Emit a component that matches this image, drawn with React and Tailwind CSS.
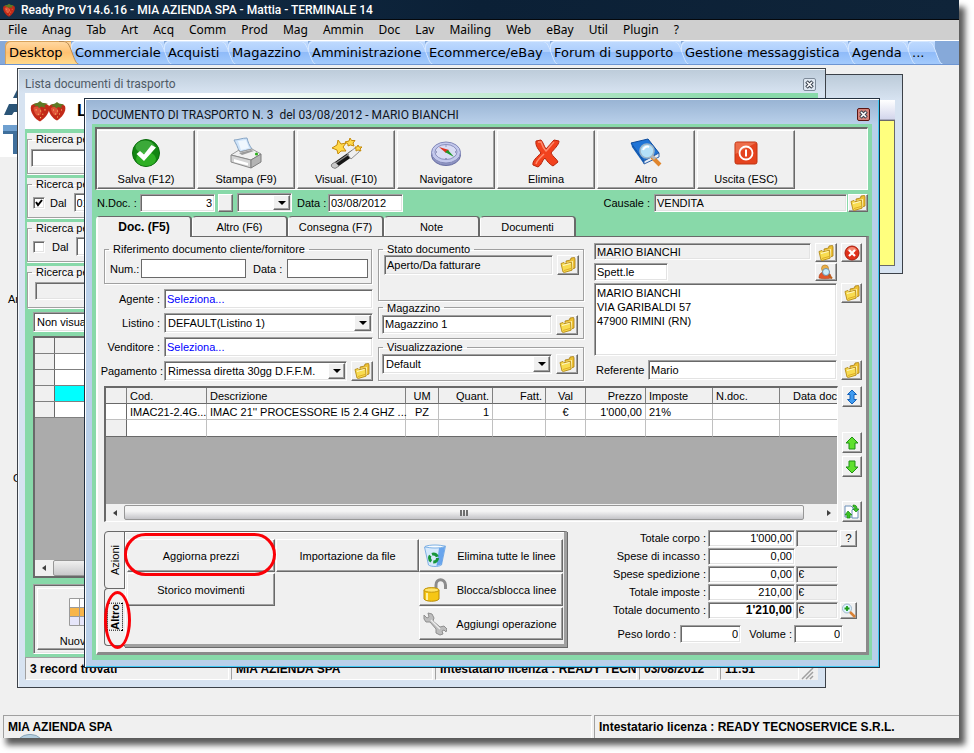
import React from "react";

const SUNKEN =
  "border border-t-[#a0a0a0] border-l-[#a0a0a0] border-b-white border-r-white shadow-[inset_1px_1px_0_#696969,inset_-1px_-1px_0_#e3e3e3]";
const RAISED =
  "border border-t-white border-l-white border-b-[#696969] border-r-[#696969] shadow-[inset_-1px_-1px_0_#a0a0a0] bg-[#f0f0f0]";
const GROUP = "min-w-0 border border-[#a0a0a0] shadow-[1px_1px_0_#fff,inset_1px_1px_0_#fff]";
const LEGEND = "ml-1 px-1 leading-3";

/* ---------- icons ---------- */

function Strawberry({ className }) {
  return (
    <svg viewBox="0 0 20 20" className={className} aria-hidden="true">
      <path d="M2 5c3-3 13-3 16 0 2 6-4 12-8 14.500C6 18 0 11 2 5Z" fill="#c22a18" />
      <path d="M4 7c3-2 6-1 7 2s-1 6-4 5c-2-2-3-5-3-7Z" fill="#ec6446" opacity=".7" />
      <path d="M3 4l5-1.500L10 1l2 1.500 5 1-3 1.500 1 2-4-1-2 1.500-1-2-3 .5 1-1.500Z" fill="#5d7a25" />
      <path d="M6 9h1M10 10h1M14 9h1M8 13h1M12 13h1M10 16h1" stroke="#f2c46a" strokeWidth="1" />
    </svg>
  );
}

function FolderIcon() {
  return (
    <svg width="16" height="16" viewBox="0 0 16 16" aria-hidden="true">
      <path d="M6 4l4.500-1 .5-2 3.500-.5.500 1.500V11l-8 3Z" fill="#eec235" stroke="#a87c10" strokeWidth=".8" />
      <path d="M6.500 5.500L13 4v8L7 14Z" fill="#fff2ae" />
      <path d="M1 6.500l3-1 1 1.200 6.500-1.500.500 8-7.500 2.200L3 15Z" fill="#f8dc50" stroke="#b58a16" strokeWidth=".9" />
      <path d="M3 8.500l7.500-2" stroke="#fff7c8" strokeWidth="1" />
      <path d="M4 13.500l7-2" stroke="#e0ac24" strokeWidth="1" />
    </svg>
  );
}

function SaveIcon() {
  return (
    <svg width="30" height="30" viewBox="0 0 30 30" aria-hidden="true">
      <circle cx="15" cy="15" r="13.500" fill="#128512" stroke="#0a6b0c" />
      <ellipse cx="15" cy="21" rx="10" ry="7" fill="#38bd2c" opacity=".75" />
      <ellipse cx="14" cy="9" rx="9.500" ry="6.500" fill="#5cc65a" opacity=".55" />
      <path d="M5.500 16l3.500-3 4 3.500L20.500 7l4.500 2.500L13 23Z" fill="#fff" />
    </svg>
  );
}

function PrinterIcon() {
  return (
    <svg width="32" height="32" viewBox="0 0 32 32" aria-hidden="true">
      <path d="M4 3c4 0 8-2 13-2 1 4 2 7 5 11L9 15C8 10 6 7 4 3Z" fill="#cfe4fa" stroke="#86a4c4" />
      <path d="M8 4l8-1 3 8-8 2Z" fill="#f6fbff" opacity=".8" />
      <path d="M1 18l8-5 1 2 12-3 9 5-10 6Z" fill="#f1f1f1" stroke="#9a9a9a" />
      <path d="M1 18l20 5v8L1 25Z" fill="#d4d4d4" stroke="#8a8a8a" />
      <path d="M21 23l10-6v8l-10 6Z" fill="#b4b4b4" stroke="#7e7e7e" />
      <path d="M4 22l14 4v2.500L4 25Z" fill="#fff" />
      <path d="M9 16l12-3 3 1-12 4Z" fill="#9b9b9b" />
      <circle cx="26.500" cy="17" r="1.600" fill="#2cae1c" />
    </svg>
  );
}

function WandIcon() {
  return (
    <svg width="32" height="32" viewBox="0 0 32 32" aria-hidden="true">
      <path d="M2 27L22 13l4 4L6 31c-3 1-6-2-4-4Z" fill="#161616" />
      <path d="M2 27l3-2 4 4-3 2c-3 1-6-2-4-4Z" fill="#c9c9c9" stroke="#666" strokeWidth=".6" />
      <path d="M17 17l8-6c3-2 6 1 4 4l-8 7Z" fill="#efefef" stroke="#777" strokeWidth=".8" />
      <path d="M6 26l13-9" stroke="#8a8a8a" strokeWidth="1.200" />
      <path d="M8 3l3 4 5-1-3 4 3 4-5 0-3 3-1-4-5-2 5-3Z" fill="#ffd84a" stroke="#c58a08" />
      <path d="M20 1l1.500 2.500 3.500 0-2 2.500 1 3-3.500-1L18 9l0-2-3-2 4-1Z" fill="#ffd84a" stroke="#c58a08" />
      <path d="M28 8l1 2 3 0-2 2 1 2-3-1-2 1 0-2-1-2 2 0Z" fill="#ffd84a" stroke="#c58a08" />
    </svg>
  );
}

function CompassIcon() {
  return (
    <svg width="32" height="28" viewBox="0 0 32 28" aria-hidden="true">
      <ellipse cx="16" cy="16" rx="14.500" ry="10.500" fill="#8e94c2" stroke="#686ea2" />
      <ellipse cx="16" cy="13.500" rx="14.500" ry="10.500" fill="#c3c8ec" stroke="#8389b8" />
      <ellipse cx="16" cy="13" rx="11" ry="7.500" fill="#d9dcf4" stroke="#8a90bd" />
      <path d="M16 14L9 8l10 3Z" fill="#e0321c" />
      <path d="M15 13l9 5-6-7Z" fill="#1d9a2a" />
      <path d="M16 6.500v1M6 13h1M25 13h1M16 19v1" stroke="#555b8c" />
    </svg>
  );
}

function DeleteIcon() {
  return (
    <svg width="30" height="30" viewBox="0 0 30 30" aria-hidden="true">
      <path
        d="M5 3l5-1c2 2 3 6 5 9 3-3 5-6 8-9l5 1c0 4-5 8-8 12 2 4 6 6 7 9l-5 4c-4-2-6-5-8-8-3 2-3 7-7 9l-5-2c-1-4 4-8 8-12C8 12 4 8 5 3Z"
        fill="#f2421e" stroke="#b8260c"
      />
      <path d="M7 4l3 0c1 3 3 7 5 9 3-3 5-6 8-9M5 26c1-4 5-7 8-10" fill="none" stroke="#ff8c6e" strokeWidth="1.500" />
    </svg>
  );
}

function BookSearchIcon() {
  return (
    <svg width="32" height="32" viewBox="0 0 32 32" aria-hidden="true">
      <path d="M1 6l17-4 11 14-15 8Z" fill="#1f74d6" stroke="#0d4b9c" />
      <path d="M1 6l13 18v3L2 10Z" fill="#0f5ab4" />
      <path d="M14 24l15-8v4l-15 7Z" fill="#e6eef8" stroke="#2f62a8" />
      <circle cx="17" cy="14" r="7" fill="#b4e0f8" stroke="#9cb4c6" strokeWidth="1.600" />
      <path d="M13 13c1-3 4-4 6-3" stroke="#fff" strokeWidth="2" fill="none" />
      <path d="M22 20l8 8" stroke="#e0862e" strokeWidth="4" />
      <path d="M22 19l3 3" stroke="#b5b5b5" strokeWidth="3" />
    </svg>
  );
}

function ExitIcon() {
  return (
    <svg width="24" height="24" viewBox="0 0 24 24" aria-hidden="true">
      <rect x="1" y="1" width="22" height="22" rx="2" fill="#e5431e" stroke="#bf3311" />
      <path d="M1.500 1.500h21L1.500 13Z" fill="#f28a68" opacity=".6" />
      <circle cx="12" cy="12" r="6.500" fill="none" stroke="#fff" strokeWidth="1.800" />
      <path d="M12 8.500v7" stroke="#fff" strokeWidth="2" />
    </svg>
  );
}

function RemoveIcon() {
  return (
    <svg width="16" height="16" viewBox="0 0 16 16" aria-hidden="true">
      <circle cx="8" cy="8" r="7" fill="#e0301a" stroke="#a81f0e" />
      <path d="M3 5c2-4 8-4 10 0-3 2-7 2-10 0Z" fill="#f58a72" />
      <path d="M5 5l6 6M11 5l-6 6" stroke="#fff" strokeWidth="2.200" />
    </svg>
  );
}

function PersonSearchIcon() {
  return (
    <svg width="16" height="16" viewBox="0 0 16 16" aria-hidden="true">
      <path d="M1 14c0-5 3-6 6-6s6 1 6 6c-4 1-8 1-12 0Z" fill="#e2562a" stroke="#a63a14" strokeWidth=".6" />
      <circle cx="7" cy="4.500" r="3.500" fill="#e9b04a" stroke="#b0751a" strokeWidth=".6" />
      <circle cx="8" cy="8" r="3.500" fill="#c9ecfb" stroke="#6f8ea6" />
      <path d="M10.500 11l3.500 3.500" stroke="#b9601d" strokeWidth="2" />
    </svg>
  );
}

function UpDownIcon() {
  return (
    <svg width="14" height="16" viewBox="0 0 14 16" aria-hidden="true">
      <path d="M7 1l4.500 4.500H9v5h2.500L7 15l-4.500-4.500H5v-5H2.500Z" fill="#3f9bf0" stroke="#1561b8" />
    </svg>
  );
}

function ArrowIcon({ className }) {
  return (
    <svg width="14" height="14" viewBox="0 0 14 14" className={className} aria-hidden="true">
      <path d="M7 1l6 6h-3v6H4V7H1Z" fill="#5fe02d" stroke="#1f8f14" />
    </svg>
  );
}

function SwapIcon() {
  return (
    <svg width="16" height="16" viewBox="0 0 16 16" aria-hidden="true">
      <path d="M1 2h6l2 2v9H1Z" fill="#fff" stroke="#6b8fb8" />
      <path d="M9 5h5v9H8V6Z" fill="#fff" stroke="#6b8fb8" />
      <path d="M4 7l4 4H6v3H3v-3H1Z" fill="#3cc224" stroke="#178a10" strokeWidth=".7" />
      <path d="M9 1c3 0 4 1 4 4h2l-3 3-3-3h2c0-2-1-2-2-2Z" fill="#3cc224" stroke="#178a10" strokeWidth=".7" />
    </svg>
  );
}

function ZoomPlusIcon() {
  return (
    <svg width="15" height="15" viewBox="0 0 15 15" aria-hidden="true">
      <circle cx="6" cy="5.500" r="4.500" fill="#dff4ff" stroke="#9fb8cc" />
      <path d="M6 3v5M3.500 5.500h5" stroke="#1e9c1a" strokeWidth="1.800" />
      <path d="M9 9l5 5" stroke="#d98236" strokeWidth="2.500" />
    </svg>
  );
}

function BinIcon() {
  return (
    <svg width="24" height="24" viewBox="0 0 24 24" aria-hidden="true">
      <path d="M1.500 3l21-1-4 19c-3 2-10 2-13 0Z" fill="#d6e9fc" stroke="#7fb0e4" />
      <path d="M16 4l6-1.500-3.500 18-5 1.500Z" fill="#4d94e8" opacity=".8" />
      <path d="M2 2.500c4-2 16-2 20 0-4 2-16 2-20 0Z" fill="#f8fcff" stroke="#7db0e4" />
      <circle cx="10.500" cy="14" r="4" fill="none" stroke="#18963a" strokeWidth="3" strokeDasharray="6.400 2" />
    </svg>
  );
}

function PadlockIcon() {
  return (
    <svg width="24" height="24" viewBox="0 0 24 24" aria-hidden="true">
      <path d="M13 12V7c0-7 9-7 9.500 0v4" fill="none" stroke="#8b8b8b" strokeWidth="3" />
      <path d="M1 12c2-3 13-3 15 0v9c-2 3-13 3-15 0Z" fill="#f6c614" stroke="#b98c06" />
      <ellipse cx="8.500" cy="12" rx="7.500" ry="2.200" fill="#ffe46a" stroke="#c99a0a" />
      <path d="M4 15v7" stroke="#fff0a0" strokeWidth="2" />
    </svg>
  );
}

function WrenchIcon() {
  return (
    <svg width="24" height="24" viewBox="0 0 24 24" aria-hidden="true">
      <path
        d="M5 1l4 1 2 4-1 3 7 6 4-1 3 3-1 3-2-2-2 1 1 3-3 1-4-2 0-4-6-7-4 0-2-3 0-4 3 3 2-1Z"
        fill="#bdbdbd" stroke="#8f8f8f"
      />
      <path d="M8 8l9 9" stroke="#ececec" strokeWidth="1.500" />
    </svg>
  );
}

/* ---------- small parts ---------- */

function IconButton({ label, className = "h-5 w-[22px]", children }) {
  return (
    <button type="button" aria-label={label} className={`${RAISED} flex shrink-0 items-center justify-center ${className}`}>
      {children}
    </button>
  );
}

function TextInput({ id, value = "", className = "", label, readOnly }) {
  return (
    <input
      id={id}
      aria-label={label}
      defaultValue={value}
      readOnly={readOnly}
      className={`${SUNKEN} min-w-0 px-[2px] outline-none ${readOnly ? "bg-[#f0f0f0]" : "bg-white"} ${className}`}
    />
  );
}

function Combo({ id, value = "", label, className = "" }) {
  return (
    <div className={`${SUNKEN} flex bg-white p-px ${className}`}>
      <select id={id} aria-label={label} className="min-w-0 flex-1 appearance-none bg-transparent pl-[2px] outline-none">
        <option>{value}</option>
      </select>
      <span className={`${RAISED} flex w-[17px] items-center justify-center`} aria-hidden="true">
        <span className="border-x-4 border-t-4 border-x-transparent border-t-black" />
      </span>
    </div>
  );
}

function CloseButton({ className }) {
  return (
    <button type="button" aria-label="Chiudi" className={`flex h-[13px] w-[13px] items-center justify-center rounded-[2px] border ${className}`}>
      <svg width="9" height="9" viewBox="0 0 9 9" aria-hidden="true">
        <path d="M1.500 1.500l6 6M7.500 1.500l-6 6" stroke="#39424f" strokeWidth="3.600" />
        <path d="M2 2l5 5M7 2l-5 5" stroke="#fff" strokeWidth="1.600" />
      </svg>
    </button>
  );
}

/* ---------- application chrome ---------- */

const MENU = ["File", "Anag", "Tab", "Art", "Acq", "Comm", "Prod", "Mag", "Ammin", "Doc", "Lav", "Mailing", "Web", "eBay", "Util", "Plugin", "?"];

const TABS = [
  ["Desktop", "w-[66px]"],
  ["Commerciale", "w-[93px]"],
  ["Acquisti", "w-[64px]"],
  ["Magazzino", "w-[80px]"],
  ["Amministrazione", "w-[117px]"],
  ["Ecommerce/eBay", "w-[125px]"],
  ["Forum di supporto", "w-[131px]"],
  ["Gestione messaggistica", "w-[167px]"],
  ["Agenda", "w-[60px]"],
  ["...", "w-[27px]"],
];

function TabGradients() {
  return (
    <svg width="0" height="0" className="absolute" aria-hidden="true">
      <linearGradient id="tab-on" x1="0" y1="0" x2="0" y2="23" gradientUnits="userSpaceOnUse">
        <stop offset="0" stopColor="#ffd9a4" />
        <stop offset=".5" stopColor="#ffc171" />
        <stop offset="1" stopColor="#ffd98b" />
      </linearGradient>
      <linearGradient id="tab-off" x1="0" y1="0" x2="0" y2="23" gradientUnits="userSpaceOnUse">
        <stop offset="0" stopColor="#bfdafe" />
        <stop offset=".5" stopColor="#abcdfd" />
        <stop offset=".5" stopColor="#8fbbf9" />
        <stop offset="1" stopColor="#a3cafc" />
      </linearGradient>
    </svg>
  );
}

function AppTab({ name, width, active, order }) {
  return (
    <button type="button" className={`relative flex h-[23px] shrink-0 ${width}`} style={{ zIndex: order }}>
      <span
        className={
          active
            ? "flex flex-1 items-center rounded-tl-[5px] bg-linear-to-b from-[#ffd9a4] via-[#ffc171] to-[#ffd98b] pl-1 whitespace-nowrap shadow-[inset_1px_1px_0_#d9a35c]"
            : "flex flex-1 items-center rounded-tl-[5px] bg-[linear-gradient(#bfdafe,#abcdfd_50%,#8fbbf9_50%,#a3cafc)] pl-1 whitespace-nowrap shadow-[inset_1px_1px_0_#d5e7ff]"
        }
      >
        <span className="relative z-10 w-0">{name}</span>
      </span>
      <svg width="20" height="23" viewBox="0 0 20 23" className="-mr-2 -ml-3 shrink-0" aria-hidden="true">
        <path d="M0 0h4c5 0 6 3 9 11s4 11 7 12H0Z" fill={active ? "url(#tab-on)" : "url(#tab-off)"} />
        <path d="M0 .5h4c5 0 6 3 9 11s4 11 7 12" fill="none" stroke={active ? "#b98a52" : "#d5e7ff"} />
      </svg>
    </button>
  );
}

/* ---------- list window ---------- */

const STATUS_CELL = "overflow-hidden border border-[#a0a0a0] border-r-white border-b-white pt-1 whitespace-nowrap";

function ListWindow() {
  return (
    <section className="absolute top-[3px] left-[17px] flex h-[620px] w-[809px] flex-col border border-[#3c4148] bg-linear-to-b from-[#bccbd9] to-[#d7e3f1] to-[24px] px-[7px] pb-[7px] shadow-[inset_1px_1px_0_#f4f8fc]">
      <header className="flex h-6 shrink-0 items-center justify-between pt-[6px] pr-[2px]">
        <h2 className="font-['Roboto'] text-[12px] leading-4 text-[#4f5a66]">Lista documenti di trasporto</h2>
        <CloseButton className="border-[#7d8a99] bg-[#dfe8f2]" />
      </header>
      <div className="flex h-9 shrink-0 items-center bg-linear-to-r from-white from-25% to-[#88d9a9] to-90% pl-1">
        <Strawberry className="-mr-1 h-6 w-[22px]" />
        <Strawberry className="mr-1 h-5 w-5" />
        <h3 className="pl-[6px] text-[17px] leading-5 font-bold">Lista</h3>
      </div>
      <div className="flex min-h-0 flex-1 flex-col bg-[#88d9a9] pl-[2px]">
        <div className="flex w-[220px] flex-col gap-[3px] pt-1">
          <div className="h-[42px] bg-[#f0f0f0]">
            <fieldset className={`${GROUP} h-[41px]`}>
              <legend className={LEGEND}>Ricerca per</legend>
              <TextInput label="Ricerca per numero" className="mt-1 ml-[3px] h-[18px] w-[210px]" />
            </fieldset>
          </div>
          {[true, false].map((on, i) => (
            <div key={i} className="h-[41px] bg-[#f0f0f0]">
              <fieldset className={`${GROUP} h-10`}>
                <legend className={LEGEND}>Ricerca per</legend>
                <div className="flex items-center gap-[7px] pt-[3px] pl-[5px]">
                  <input id={`dal${i}`} type="checkbox" defaultChecked={on} className={`${SUNKEN} h-3 w-3 appearance-none bg-white`} />
                  {on && (
                    <svg viewBox="0 0 8 8" className="pointer-events-none -ml-[17px] h-2 w-2" aria-hidden="true">
                      <path d="M1 3l2 3 4-5" fill="none" stroke="#000" strokeWidth="2" />
                    </svg>
                  )}
                  <label htmlFor={`dal${i}`}>Dal</label>
                  <TextInput label="Data iniziale" value={on ? "01/08/2012" : ""} className="h-[19px] w-20" />
                </div>
              </fieldset>
            </div>
          ))}
          <div className="h-[42px] bg-[#f0f0f0]">
            <fieldset className={`${GROUP} h-[42px]`}>
              <legend className={LEGEND}>Ricerca per</legend>
              <TextInput label="Ricerca per stato" readOnly className="mt-1 ml-[7px] h-[18px] w-[200px]" />
            </fieldset>
          </div>
        </div>
        <div className="mt-1 ml-[6px] flex min-h-0 flex-1 flex-col">
          <Combo label="Filtro" value="Non visualizzare" className="h-5 w-[200px]" />
          <div className="mt-1 flex h-[242px] w-[200px] flex-col border-2 border-[#696969] bg-[#ababab]">
            {["", "bg-white", "bg-white", "bg-[#00ffff]", "bg-white"].map((c, i) => (
              <div key={i} className="flex h-4 shrink-0 border-b border-[#808080] bg-[#f0f0f0]">
                <span className="w-5 border-r border-[#696969]" />
                <span className={`flex-1 ${c}`} />
              </div>
            ))}
            <div className="mt-auto flex h-4 bg-[#f0f0f0]">
              <span className="flex w-[18px] items-center justify-center">
                <span className="border-y-[3px] border-r-4 border-y-transparent border-r-[#404040]" />
              </span>
              <span className="flex-1 rounded-[2px] border border-[#979797] bg-linear-to-b from-[#f0f0f0] to-[#c9c9cb]" />
            </div>
          </div>
          <div className={`${SUNKEN} mt-[6px] h-[70px] w-[160px] bg-[#f0f0f0] p-[3px]`}>
            <button type="button" className={`${RAISED} flex h-full w-[106px] flex-col items-center justify-end pb-[2px]`}>
              <svg width="42" height="28" viewBox="0 0 42 28" className="mb-[9px]" aria-hidden="true">
                <path d="M.5 .5h41v27H.5Z" fill="#fff" stroke="#9a9a9a" />
                <path d="M1 10h40v8H1Z" fill="#f7b54a" />
                <path d="M1 19h40v8H1Z" fill="#e6e6fa" />
                <path d="M10.500 0v28M20.500 0v28M30.500 0v28M0 9.500h42M0 18.500h42" stroke="#9a9a9a" />
              </svg>
              <span className="leading-3">Nuovo (INS)</span>
            </button>
          </div>
        </div>
      </div>
      <footer className="flex h-[23px] shrink-0 gap-[2px] bg-[#f0f0f0] text-[12px] font-bold">
        <span className={`${STATUS_CELL} w-[204px] pl-1`}>3 record trovati</span>
        <span className={`${STATUS_CELL} w-[202px] pl-1`}>MIA AZIENDA SPA</span>
        <span className={`${STATUS_CELL} w-[202px] pl-1`}>Intestatario licenza : READY TECN</span>
        <span className={`${STATUS_CELL} w-[79px] pl-1`}>03/08/2012</span>
        <span className={`${STATUS_CELL} w-[79px] pl-1`}>11:51</span>
        <svg width="14" height="14" viewBox="0 0 14 14" className="mt-auto" aria-hidden="true">
          <path d="M1 13L12 2M5 13l7-7M9 13l3-3" stroke="#a0a0a0" strokeWidth="1.500" />
        </svg>
      </footer>
    </section>
  );
}

/* ---------- document window ---------- */

const TOOLS = [
  ["Salva (F12)", SaveIcon],
  ["Stampa (F9)", PrinterIcon],
  ["Visual. (F10)", WandIcon],
  ["Navigatore", CompassIcon],
  ["Elimina", DeleteIcon],
  ["Altro", BookSearchIcon],
  ["Uscita (ESC)", ExitIcon],
];

const COLUMNS = [
  ["", "w-[21px]", "text-left", ""],
  ["Cod.", "w-[80px]", "text-left", "IMAC21-2.4G..."],
  ["Descrizione", "w-[199px]", "text-left", "IMAC 21'' PROCESSORE I5 2.4 GHZ ..."],
  ["UM", "w-[33px]", "text-center", "PZ"],
  ["Quant.", "w-[54px]", "text-right", "1"],
  ["Fatt.", "w-[53px]", "text-right", ""],
  ["Val", "w-[40px]", "text-center", "€"],
  ["Prezzo", "w-[60px]", "text-right", "1'000,00"],
  ["Imposte", "w-[67px]", "text-left", "21%"],
  ["N.doc.", "w-[67px]", "text-left", ""],
  ["Data doc", "", "text-right", ""],
];

function LinesTable() {
  return (
    <div className="flex h-[136px] min-w-0 flex-1 flex-col overflow-hidden border-t-2 border-l-2 border-r border-b border-[#696969] border-r-white border-b-white bg-[#ababab]">
      <table className="w-full table-fixed border-separate border-spacing-0">
        <thead>
          <tr className="bg-[#f0f0f0]">
            {COLUMNS.map(([name, w, align], i) => (
              <th key={i} className={`${w} ${align} h-4 border-r border-b border-r-[#808080] border-b-[#696969] px-[3px] leading-[14px] font-normal whitespace-nowrap last:border-r-0 last:px-0`}>
                {name}
              </th>
            ))}
          </tr>
        </thead>
        <tbody>
          <tr className="bg-white">
            {COLUMNS.map(([, , align, v], i) => (
              <td key={i} className={`${align} h-4 border-r border-b border-[#c0c0c0] px-[3px] leading-[14px] whitespace-nowrap first:border-r-[#696969] last:border-r-0`}>
                {v}
              </td>
            ))}
          </tr>
          <tr className="bg-white">
            {COLUMNS.map((c, i) => (
              <td key={i} className="h-[17px] border-r border-b border-r-[#c0c0c0] border-b-[#696969] first:border-r-[#696969] first:bg-[#f0f0f0] last:border-r-0" />
            ))}
          </tr>
        </tbody>
      </table>
      <div className="mt-auto flex h-[17px] bg-[#f0f0f0]">
        <span className="flex w-[18px] items-center justify-center">
          <span className="border-y-[3px] border-r-4 border-y-transparent border-r-[#404040]" />
        </span>
        <span className="my-px flex flex-1 items-center justify-center gap-px rounded-[2px] border border-[#979797] bg-linear-to-b from-[#f4f4f4] from-40% to-[#c4c4c8]">
          <span className="h-[6px] w-[2px] bg-[#707070]" />
          <span className="h-[6px] w-[2px] bg-[#707070]" />
          <span className="h-[6px] w-[2px] bg-[#707070]" />
        </span>
        <span className="flex w-[33px] items-center justify-center pl-4">
          <span className="border-y-[3px] border-l-4 border-y-transparent border-l-[#404040]" />
        </span>
      </div>
    </div>
  );
}

function HeaderForm() {
  return (
    <div className="flex h-[144px] pt-[6px]">
      <div className="flex w-[268px] flex-col">
        <fieldset className={`${GROUP} h-[41px]`}>
          <legend className={LEGEND}>Riferimento documento cliente/fornitore</legend>
          <div className="flex items-center pt-1 pr-[3px] pl-[5px]">
            <label htmlFor="rif-num" className="w-[31px] shrink-0">Num.:</label>
            <input id="rif-num" className="h-[19px] w-[105px] border border-[#696969] bg-white px-1 outline-none" />
            <label htmlFor="rif-data" className="w-[41px] shrink-0 pl-[7px]">Data :</label>
            <input id="rif-data" className="h-[19px] min-w-0 flex-1 border border-[#696969] bg-white px-1 outline-none" />
          </div>
        </fieldset>
        <div className="-mr-px flex flex-col gap-1 pt-[5px]">
          <div className="flex h-5 items-center">
            <label htmlFor="agente" className="w-[60px] shrink-0 pr-1 text-right">Agente :</label>
            <TextInput id="agente" value="Seleziona..." className="h-5 flex-1 text-[#0000ff]" />
          </div>
          <div className="flex h-5 items-center">
            <label htmlFor="listino" className="w-[60px] shrink-0 pr-1 text-right">Listino :</label>
            <Combo id="listino" value="DEFAULT(Listino 1)" className="h-5 flex-1" />
          </div>
          <div className="flex h-5 items-center">
            <label htmlFor="venditore" className="w-[60px] shrink-0 pr-1 text-right">Venditore :</label>
            <TextInput id="venditore" value="Seleziona..." className="h-5 flex-1 text-[#0000ff]" />
          </div>
          <div className="flex h-5 items-center">
            <label htmlFor="pagamento" className="-ml-1 w-16 shrink-0 pr-px text-right whitespace-nowrap">Pagamento :</label>
            <Combo id="pagamento" value="Rimessa diretta 30gg D.F.F.M." className="mr-1 h-5 flex-1" />
            <IconButton label="Scegli pagamento"><FolderIcon /></IconButton>
          </div>
        </div>
      </div>

      <div className="ml-[6px] flex w-[206px] flex-col">
        <fieldset className={`${GROUP} h-[58px]`}>
          <legend className={LEGEND}>Stato documento</legend>
          <div className="flex gap-1 pr-1 pl-[5px]">
            <TextInput label="Stato documento" readOnly value="Aperto/Da fatturare" className="h-5 flex-1" />
            <IconButton label="Scegli stato"><FolderIcon /></IconButton>
          </div>
        </fieldset>
        <fieldset className={`${GROUP} mt-px h-[38px]`}>
          <legend className={LEGEND}>Magazzino</legend>
          <div className="flex gap-1 pt-px pr-[5px] pl-[3px]">
            <TextInput label="Magazzino" value="Magazzino 1" className="h-[19px] flex-1" />
            <IconButton label="Scegli magazzino"><FolderIcon /></IconButton>
          </div>
        </fieldset>
        <fieldset className={`${GROUP} mt-[2px] h-10`}>
          <legend className={LEGEND}>Visualizzazione</legend>
          <div className="flex gap-1 pt-px pr-[5px] pl-[3px]">
            <Combo label="Visualizzazione" value="Default" className="h-5 flex-1" />
            <IconButton label="Scegli visualizzazione"><FolderIcon /></IconButton>
          </div>
        </fieldset>
      </div>

      <div className="ml-[10px] flex min-w-0 flex-1 flex-col gap-px">
        <div className="flex h-[19px] items-start">
          <TextInput label="Cliente" readOnly value="MARIO BIANCHI" className="mr-1 h-[17px] flex-1" />
          <IconButton label="Scegli cliente" className="mr-1 h-[19px] w-[22px]"><FolderIcon /></IconButton>
          <IconButton label="Rimuovi cliente" className="h-[19px] w-[21px]"><RemoveIcon /></IconButton>
        </div>
        <div className="flex h-[19px] justify-between pr-[25px]">
          <TextInput label="Titolo" value="Spett.le" className="h-[18px] w-[74px]" />
          <IconButton label="Cerca anagrafica" className="h-[18px] w-[22px]"><PersonSearchIcon /></IconButton>
        </div>
        <div className="flex gap-1">
          <textarea
            aria-label="Indirizzo"
            defaultValue={"MARIO BIANCHI\nVIA GARIBALDI 57\n47900 RIMINI (RN)"}
            className={`${SUNKEN} h-[73px] min-w-0 flex-1 resize-none bg-white px-[2px] py-[2px] leading-[14px] outline-none`}
          />
          <IconButton label="Scegli indirizzo" className="h-5 w-[21px]"><FolderIcon /></IconButton>
        </div>
        <div className="flex items-center pt-[3px]">
          <label htmlFor="referente" className="w-[54px] pl-[2px]">Referente</label>
          <TextInput id="referente" value="Mario" className="mr-1 h-5 flex-1" />
          <IconButton label="Scegli referente" className="h-5 w-[21px]"><FolderIcon /></IconButton>
        </div>
      </div>
    </div>
  );
}

function ActionButton({ children, Icon, className = "" }) {
  return (
    <button type="button" className={`${RAISED} flex h-[33px] items-center justify-center whitespace-nowrap ${className}`}>
      {Icon && <Icon />}
      <span className={Icon ? "flex-1 pl-1 text-center" : ""}>{children}</span>
    </button>
  );
}

function Actions() {
  return (
    <div className="relative flex h-[116px] w-[463px]">
      <div className="z-10 -mr-px flex w-[21px] flex-col">
        <button type="button" className="flex h-[58px] items-center justify-center rounded-l-[4px] border border-[#696969] bg-[#f0f0f0]">
          <span className="rotate-180 [writing-mode:vertical-rl]">Azioni</span>
        </button>
        <button type="button" className="-mt-px flex h-[58px] items-center justify-center rounded-l-[4px] border border-r-0 border-[#696969] bg-[#f0f0f0]">
          <span className="rotate-180 border border-dotted border-black font-bold [writing-mode:vertical-rl]">Altro</span>
        </button>
      </div>
      <div className="flex flex-1 justify-between border border-r-[3px] border-b-[3px] border-[#696969] border-r-[#a0a0a0] border-b-[#a0a0a0] pt-[7px] pr-px pl-[2px] shadow-[1px_1px_0_#696969,inset_1px_1px_0_#fff]">
        <div className="flex flex-col gap-px">
          <div className="flex gap-px">
            <ActionButton className="w-[148px]">Aggiorna prezzi</ActionButton>
            <ActionButton className="w-[143px]">Importazione da file</ActionButton>
          </div>
          <ActionButton className="w-[148px]">Storico movimenti</ActionButton>
        </div>
        <div className="flex w-[144px] flex-col gap-px">
          <ActionButton Icon={BinIcon} className="pl-[3px]">Elimina tutte le linee</ActionButton>
          <ActionButton Icon={PadlockIcon} className="pl-[3px]">Blocca/sblocca linee</ActionButton>
          <ActionButton Icon={WrenchIcon} className="pl-[3px]">Aggiungi operazione</ActionButton>
        </div>
      </div>
      {/* red highlight rings over the button and the tab */}
      <span className="pointer-events-none absolute top-[2px] left-5 z-20 h-[43px] w-[152px] rounded-[22px] border-[3px] border-[#fb0007]" />
      <span className="pointer-events-none absolute top-[60px] left-0 z-20 h-[58px] w-[27px] rounded-[50%] border-[3px] border-[#fb0007]" />
    </div>
  );
}

const TOTALS = [
  ["Totale corpo :", "1'000,00", ""],
  ["Spese di incasso :", "0,00", null],
  ["Spese spedizione :", "0,00", "€"],
  ["Totale imposte :", "210,00", "€"],
  ["Totale documento :", "1'210,00", "€"],
];

function Totals() {
  return (
    <div className="flex flex-col">
      {TOTALS.map(([name, value, cur], i) => (
        <div key={name} className="flex h-[18px] items-center">
          <label htmlFor={`tot${i}`} className="flex-1 pr-[2px] text-right">{name}</label>
          <TextInput id={`tot${i}`} value={value} className={`h-[17px] w-[87px] text-right ${i === 4 ? "text-[12px] font-bold" : ""}`} />
          <span className="ml-px flex w-[66px] items-center">
            {cur !== null && <TextInput label={`Valuta ${name}`} readOnly value={cur} className="h-[17px] w-[42px] -indent-px" />}
            {i === 0 && <IconButton label="Aiuto" className="ml-[2px] h-[17px] w-[17px]">?</IconButton>}
            {i === 4 && <IconButton label="Dettaglio totale" className="ml-[2px] h-[17px] w-[17px]"><ZoomPlusIcon /></IconButton>}
          </span>
        </div>
      ))}
      <div className="flex items-center justify-end pt-[6px] pr-[19px]">
        <label htmlFor="peso" className="pr-1">Peso lordo :</label>
        <TextInput id="peso" value="0" className="mr-2 h-[18px] w-[61px] text-right" />
        <label htmlFor="volume" className="pr-[2px]">Volume :</label>
        <TextInput id="volume" value="0" className="h-[18px] w-[49px] text-right" />
      </div>
    </div>
  );
}

function DocumentWindow() {
  return (
    <section className="absolute top-[33px] left-[84px] flex w-[796px] flex-col border border-[#23303f] bg-linear-to-b from-[#98b3d3] to-[#b9d0ea] to-[25px] px-[7px] pb-[7px] shadow-[inset_1px_1px_0_#fff,inset_-1px_-1px_0_#3fc8f4]">
      <header className="flex h-[25px] items-center justify-between pt-[6px] pr-[2px]">
        <h2 className="font-['Roboto'] text-[12px] leading-4 whitespace-pre text-[#10151c]">
          {"DOCUMENTO DI TRASPORTO N. 3  del 03/08/2012 - MARIO BIANCHI"}
        </h2>
        <CloseButton className="border-[#5a1412] bg-[#d4827a]" />
      </header>
      <div className="flex flex-col bg-[#88d9a9] px-[3px] pt-[3px] pb-[5px]">
        <div className="mr-px flex h-[63px] gap-[2px] border-t-2 border-l-2 border-r border-b border-[#696969] border-r-white border-b-white bg-[#f0f0f0] pt-px">
          {TOOLS.map(([name, Icon]) => (
            <button key={name} type="button" className={`${RAISED} flex h-[59px] w-[98px] flex-col items-center justify-end pb-[2px]`}>
              <span className="flex h-[34px] items-center"><Icon /></span>
              <span className="mt-[2px] leading-[14px]">{name}</span>
            </button>
          ))}
        </div>
        <div className="flex h-[25px] items-center pl-[2px]">
          <label htmlFor="ndoc" className="w-[43px] shrink-0">N.Doc. :</label>
          <TextInput id="ndoc" value="3" className="h-[18px] w-[75px] text-right" />
          <IconButton label="Numero" className="ml-[3px] h-[18px] w-[15px]" />
          <Combo label="Serie" className="ml-1 h-[19px] w-[55px]" />
          <label htmlFor="data" className="w-9 shrink-0 pl-[5px]">Data :</label>
          <TextInput id="data" value="03/08/2012" className="h-[18px] w-[75px]" />
          <label htmlFor="causale" className="ml-auto pr-1">Causale :</label>
          <TextInput id="causale" readOnly value="VENDITA" className="mr-px h-[18px] w-[193px]" />
          <IconButton label="Scegli causale" className="mr-px h-[18px] w-[20px]"><FolderIcon /></IconButton>
        </div>
        <div role="tablist" className="flex h-[21px] items-end pl-px">
          {["Doc. (F5)", "Altro (F6)", "Consegna (F7)", "Note", "Documenti"].map((name, i) => (
            <button
              key={name}
              type="button"
              role="tab"
              aria-selected={i === 0}
              className={
                i === 0
                  ? "z-10 -mb-px h-[21px] w-[96px] rounded-t-[4px] border-t border-r-2 border-l-2 border-[#696969] border-l-white bg-[#f0f0f0] text-[12px] font-bold"
                  : "h-5 w-[96px] rounded-t-[4px] border-t border-r-2 border-l border-[#696969] border-l-white bg-[#f0f0f0]"
              }
            >
              {name}
            </button>
          ))}
        </div>
        <div className="ml-px flex flex-col border-t border-l-2 border-r-[3px] border-b-[3px] border-white border-t-[#696969] border-r-[#8a8a8a] border-b-[#8a8a8a] bg-[#f0f0f0] pr-1 pb-[5px] pl-[6px]">
          <HeaderForm />
          <div className="mt-[5px] flex gap-1">
            <LinesTable />
            <div className="flex w-5 flex-col">
              <IconButton label="Ordina" className="h-[21px] w-5"><UpDownIcon /></IconButton>
              <IconButton label="Sposta su" className="mt-[25px] h-[21px] w-5"><ArrowIcon /></IconButton>
              <IconButton label="Sposta giù" className="mt-[3px] h-[21px] w-5"><ArrowIcon className="rotate-180" /></IconButton>
              <IconButton label="Scambia" className="mt-auto h-[21px] w-5"><SwapIcon /></IconButton>
            </div>
          </div>
          <div className="flex justify-between pt-[7px]">
            <div className="pt-[2px]"><Actions /></div>
            <Totals />
          </div>
        </div>
      </div>
    </section>
  );
}

export default function App() {
  return (
    <div className="h-screen min-h-[753px] w-full bg-white pr-[15px] pb-[15px] font-['Liberation_Sans',sans-serif] text-[11px] leading-[14px] text-black">
      <TabGradients />
      <div className="flex h-full flex-col bg-[#f0f0f0] shadow-[6px_7px_6px_#5a5a5a]">
        <header className="flex h-[20px] shrink-0 items-center gap-[5px] border-b border-[#05080c] bg-linear-to-r from-[#14304a] via-[#0b2036] to-[#0f2439] pl-[2px] text-white">
          <Strawberry className="h-4 w-[14px]" />
          <h1 className="font-['Roboto'] text-[12px] leading-4 font-medium">Ready Pro V14.6.16 - MIA AZIENDA SPA - Mattia - TERMINALE 14</h1>
        </header>
        <nav className="flex h-[21px] shrink-0 items-center gap-[15px] border-b border-white bg-[#cfcfcf] pl-2 font-['Noto_Sans'] text-[12px] leading-4">
          {MENU.map((m) => (
            <button key={m} type="button">{m}</button>
          ))}
        </nav>
        <nav className="flex h-6 shrink-0 items-end border-b border-[#6d95d2] bg-[#86a9d9] pl-[5px] font-['DejaVu_Sans'] text-[13px] leading-4">
          {TABS.map(([name, width], i) => (
            <AppTab key={name} name={name} width={width} active={i === 0} order={TABS.length - i} />
          ))}
        </nav>

        <main className="relative isolate min-h-0 flex-1">
          <div className="flex h-[92px] w-[60px] bg-white">
            <svg width="60" height="92" viewBox="0 0 60 92" aria-hidden="true">
              <path d="M17 25L13 33h4ZM9 39L4 50h8l2-3h3V39Z" fill="#2b5578" />
              <path d="M3 60h30v9H3Z" fill="#6fa0d0" />
              <path d="M3 66h30v3H17v20h-4V69H3Z" fill="#3f6f9c" />
            </svg>
          </div>
          <span className="absolute top-[227px] left-2">Ar</span>
          <span className="absolute top-[406px] left-[13px]">C</span>

          <section className="absolute top-[9px] left-[500px] flex h-[200px] w-[403px] flex-col border border-[#3c4148] bg-linear-to-b from-[#bccbd9] to-[#d7e3f1] to-[25px] px-[7px] pt-[25px] pb-[7px]">
            <div className="h-5 border-b border-[#a7a9bd] bg-linear-to-b from-white to-[#d3d6ec]" />
            <div className="flex-1 border border-[#696969] bg-[#ffff7e]" />
          </section>
          <ListWindow />
          <DocumentWindow />
        </main>

        <footer className="relative flex h-[23px] shrink-0 gap-[2px] overflow-hidden pl-[3px] text-[12px] font-bold">
          <span className="flex w-[589px] items-center border-t border-r border-l border-[#a0a0a0] border-r-white pl-1">MIA AZIENDA SPA</span>
          <span className="flex flex-1 items-center border-t border-l border-[#a0a0a0] pl-1">Intestatario licenza : READY TECNOSERVICE S.R.L.</span>
          <span className="absolute top-[19px] left-[15px] h-7 w-[30px] rounded-full border border-[#8aa5b8] bg-[#b5cede]" />
        </footer>
      </div>
    </div>
  );
}
